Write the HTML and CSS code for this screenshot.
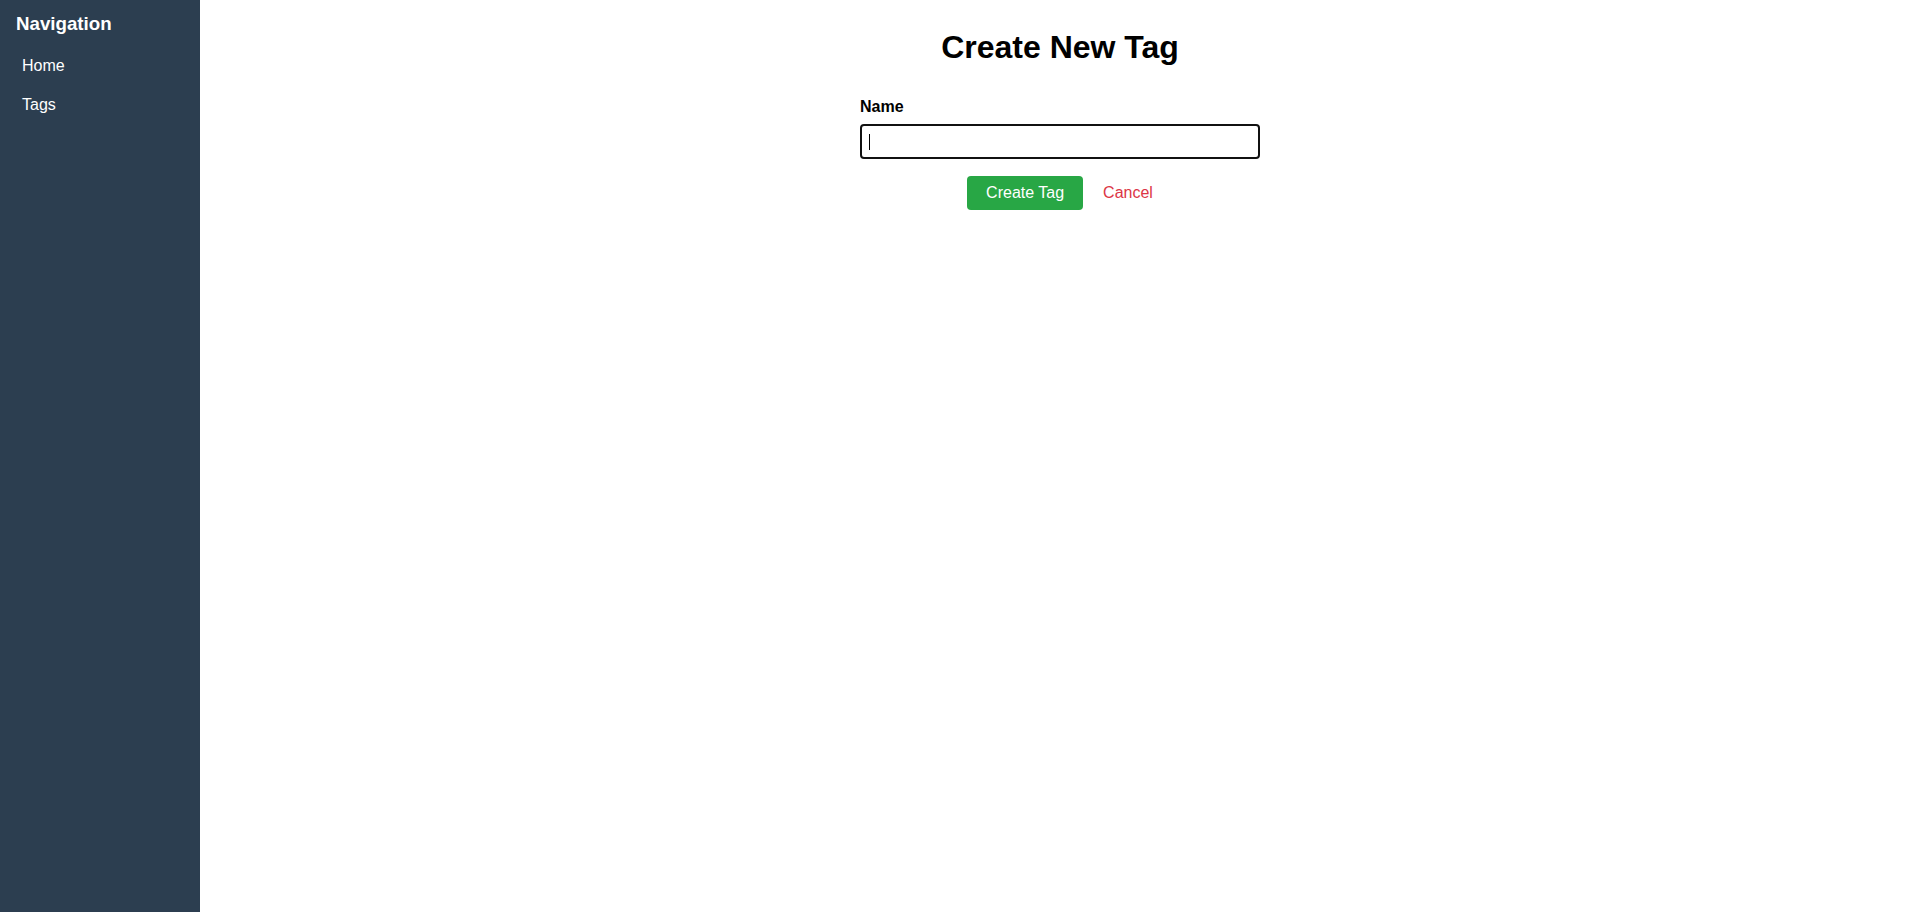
FILE: index.html
```html
<!DOCTYPE html>
<html lang="en">
<head>
<meta charset="utf-8">
<title>Create New Tag</title>
<link rel="stylesheet" href="styles.css">
</head>
<body>
<div class="layout">
  <nav class="sidebar">
    <h3 class="sidebar-title">Navigation</h3>
    <ul class="nav-list">
      <li><a class="nav-link" href="#">Home</a></li>
      <li><a class="nav-link" href="#">Tags</a></li>
    </ul>
  </nav>
  <main class="main">
    <h1 class="page-title">Create New Tag</h1>
    <form class="tag-form">
      <label class="field-label" for="name">Name</label>
      <div class="input-wrap">
        <input class="field-input" id="name" type="text">
        <span class="caret"></span>
      </div>
      <div class="actions">
        <button class="btn-create" type="button">Create Tag</button>
        <a class="btn-cancel" href="#">Cancel</a>
      </div>
    </form>
  </main>
</div>
</body>
</html>
```

FILE: styles.css
```css
* { box-sizing: border-box; }
html, body { margin: 0; padding: 0; height: 100%; }
body {
  font-family: "Liberation Sans", Arial, sans-serif;
  color: #000;
  background: #fff;
}
.layout {
  display: flex;
  min-height: 100vh;
}
.sidebar {
  width: 200px;
  flex-shrink: 0;
  background: #2c3e50;
  color: #fff;
  padding: 13px 16px;
}
.sidebar-title {
  margin: 0 0 12px;
  font-size: 18.72px;
  font-weight: bold;
}
.nav-list {
  list-style: none;
  margin: 0;
  padding: 0;
  display: flex;
  flex-direction: column;
  gap: 1px;
}
.nav-link {
  display: block;
  color: #fff;
  text-decoration: none;
  font-size: 16px;
  padding: 10px 6px;
}
.main {
  flex: 1;
  padding-top: 29px;
  display: flex;
  flex-direction: column;
  align-items: center;
}
.page-title {
  margin: 0 0 32px;
  font-size: 32px;
  font-weight: bold;
  line-height: 37px;
}
.tag-form {
  width: 400px;
  display: flex;
  flex-direction: column;
}
.field-label {
  font-size: 16px;
  font-weight: bold;
  margin-bottom: 8px;
}
.input-wrap {
  position: relative;
  display: flex;
}
.field-input {
  flex: 1;
  height: 35px;
  padding: 8px;
  border: 2px solid #111;
  border-radius: 4px;
  font-family: "Liberation Sans", Arial, sans-serif;
  font-size: 13.33px;
  outline: none;
}
.caret {
  position: absolute;
  left: 9px;
  top: 10px;
  width: 1px;
  height: 16px;
  background: #000;
}
.actions {
  display: flex;
  justify-content: center;
  align-items: center;
  gap: 20px;
  margin-top: 17px;
}
.btn-create {
  background: #28a745;
  color: #fff;
  border: none;
  border-radius: 4px;
  padding: 8px 19px;
  font-family: "Liberation Sans", Arial, sans-serif;
  font-size: 16px;
  line-height: 18px;
}
.btn-cancel {
  color: #dc3545;
  text-decoration: none;
  font-size: 16px;
}
```
